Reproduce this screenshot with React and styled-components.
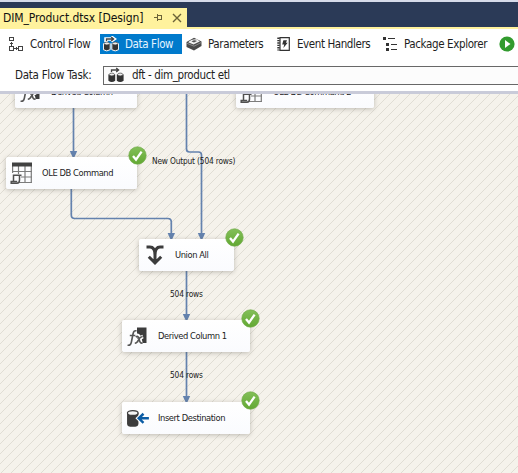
import React from 'react';
import styled, { createGlobalStyle } from 'styled-components';

const Global = createGlobalStyle`
  body { margin: 0; background: #fff; overflow: hidden; }
  * { box-sizing: border-box; }
`;
const Window = styled.div`
  width: 518px; height: 473px; display: flex; flex-direction: column; overflow: hidden;
  font-family: "DejaVu Sans Condensed", "DejaVu Sans", sans-serif;
  font-stretch: condensed; font-size: 11.5px; color: #1e1e1e;
`;
const TabStrip = styled.header`
  height: 29px; flex: none; display: flex; align-items: flex-end;
  background: #2b3a57; border-top: 2px solid #d6dbe9; border-bottom: 2px solid #fff29d;
`;
const DocumentTab = styled.div`
  width: 187px; height: 19px; padding-left: 3px; display: flex; align-items: center;
  background: #fff29d; color: #111;
  svg { flex: none; }
`;
const Label = styled.span`
  display: block; flex: none; width: ${p => p.$w}px; white-space: nowrap;
  font-size: ${p => p.$size || 11.5}px; letter-spacing: ${p => p.$ls || 0}px; line-height: 16px;
`;
const Toolbar = styled.nav`
  height: 33px; flex: none; display: flex; padding-top: 5px; background: #fff;
`;
const ToolButton = styled.div`
  height: 20px; flex: none; width: ${p => p.$w}px; padding-left: ${p => p.$pad}px;
  display: flex; align-items: center; gap: ${p => p.$gap}px;
  background: ${p => (p.$active ? '#007acc' : 'transparent')};
  color: ${p => (p.$active ? '#e6f4ff' : '#1e1e1e')};
  svg { flex: none; }
`;
const TaskBar = styled.div`
  height: 32px; flex: none; display: flex; align-items: center; padding: 0 0 3px 15px;
  background: #fff; border-bottom: 3px solid #c9cbd9;
`;
const TaskSelect = styled.div`
  flex: none; width: 430px; height: 19px; display: flex; align-items: center; gap: 8px;
  padding-left: 4px; border: 1px solid #686868; background: #fcfcfc;
`;
const Surface = styled.main`
  position: relative; height: 379px; flex: none; overflow: hidden; background: #f5f2eb;
`;
const Wires = styled.svg`position: absolute; left: 0; top: 0;`;
const Node = styled.div`
  position: absolute; left: ${p => p.$x}px; top: ${p => p.$y}px; width: ${p => p.$w}px; height: 32px;
  display: flex; align-items: center; padding-left: ${p => p.$pad}px; gap: ${p => p.$gap}px;
  background: linear-gradient(#fff, #fafbfe); border-radius: 2px; color: #222;
  box-shadow: 0 1px 5px rgba(90, 85, 75, .36);
  > svg { flex: none; }
`;
const Badge = styled.svg`position: absolute; right: -10px; top: -11px;`;
const RowCount = styled.span`
  position: absolute; left: ${p => p.$x}px; top: ${p => p.$y}px; white-space: nowrap;
  font-size: 8.3px; line-height: 12px; letter-spacing: -0.17px; color: #222;
`;

const Pin = () => (
  <svg width="9" height="9" fill="none" stroke="#6b6238" shapeRendering="crispEdges">
    <path d="M0 4.5h3M3.5 1v7M3 2.5h5M3 6.5h5M7.5 2v5" />
  </svg>
);
const Close = () => (
  <svg width="10" height="10" stroke="#6b6238" strokeWidth="1.4"><path d="M1 1l8 8M9 1l-8 8" /></svg>
);
const ControlFlowIcon = () => (
  <svg width="15" height="16" fill="none" stroke="#444" shapeRendering="crispEdges">
    <path d="M.5 1.5h4v3h-4zM.5 10.5h4v4h-4zM9.5 10.5h4v4h-4zM2.5 6v4M1 7.5h3M5 12.5h4M7.5 11v3" />
  </svg>
);
const DataFlowIcon = ({ light }) => {
  const ring = light ? '#fff' : 'none';
  return (
    <svg width="16" height="16" viewBox="0 0 16 16">
      <path d="M3 6V3h7M8 .8L11 3 8 5.2" fill="none" stroke={ring} strokeWidth="3.5" />
      <path d="M.4 7.5h6.8v6.2q-3.4 2.4-6.8 0zM8.8 7.5h6.8v6.2q-3.4 2.4-6.8 0z" fill="#333" stroke={ring} />
      <path d="M3.5 5V3H10M8.2 1l2.4 2-2.4 2" fill="none" stroke="#444" strokeWidth="1.3" />
      <ellipse cx="3.8" cy="7.5" rx="2.6" ry="1.4" fill="#eee" stroke="#444" strokeWidth=".7" />
      <ellipse cx="12.2" cy="7.5" rx="2.6" ry="1.4" fill="#eee" stroke="#444" strokeWidth=".7" />
    </svg>
  );
};
const ParametersIcon = () => (
  <svg width="16" height="14" viewBox="0 0 16 14">
    <path d="M.5 5L8 .8l7.5 3.7V9L8 13.5.5 10z" fill="#4a4a4a" />
    <path d="M2.2 5.2Q5 2 11 2.3l2.8 2.2L7.5 7.4z" fill="#f2f2f2" /><path d="M5.5 4.4q3-2 5.5-.3L8 5.6z" fill="#555" />
    <path d="M1 6.3l7 2.9 7-3.6" fill="none" stroke="#999" strokeWidth=".8" />
  </svg>
);
const EventIcon = () => (
  <svg width="13" height="14" viewBox="0 0 13 14">
    <path d="M3 .7h9.3v12.6H3z" fill="#fff" stroke="#333" strokeWidth="1.2" />
    <path d="M1.5 .5v13" stroke="#333" strokeWidth="2.4" strokeDasharray="1.4 1" />
    <path d="M6.4 3.2h3.6L8.9 5.8h1.8L6.4 11l.8-3.6H5.2z" fill="#333" />
  </svg>
);
const ExplorerIcon = () => (
  <svg width="15" height="15" fill="#333" shapeRendering="crispEdges">
    <path d="M0 0h3v3H0zM5 1h7v1H5zM3 6h3v3H3zM8 7h6v1H8zM3 11h3v3H3zM8 12h6v1H8z" />
  </svg>
);
const PlayIcon = () => (
  <svg width="16" height="16" viewBox="0 0 16 16">
    <circle cx="8" cy="8" r="7.6" fill="#329b2e" /><path d="M6 4l5.5 4L6 12z" fill="#fff" />
  </svg>
);
const TableIcon = () => (
  <svg width="24" height="24" viewBox="0 0 24 24" fill="none">
    <path d="M3.6 2v10M9.5 5v8M16 5v17M22.3 3v19M3 10.5h20M12 16h11M10 21.5h13" stroke="#7c7c7c" strokeWidth="1.2" />
    <path d="M3 1.5h20v4H3z" fill="#414141" />
    <path d="M4.5 21V14.2h8M10.5 14v5q0 3.2-2.5 3.2H2.2v-1.6h6" stroke="#505050" strokeWidth="1.5" />
  </svg>
);
const MergeIcon = () => (
  <svg width="20" height="22" viewBox="0 0 20 22" fill="none" stroke="#3c3c3c" strokeWidth="3">
    <path d="M1.5 3H5q5 0 5 8v7M18.5 3H15q-5 0-5 8M3.8 12.7L10 18.8l6.2-6.1" />
  </svg>
);
const FormulaIcon = () => (
  <svg width="23" height="23" viewBox="0 0 23 23">
    <path d="M11 2.5h9.5v15.5H11z" fill="#3c3c3c" />
    <path d="M9.5 10.5q3-1 4 2l1.5 6M17 11.5q-3 1-7 7" fill="none" stroke="#fff" strokeWidth="3.6" />
    <g fill="none" stroke="#555" strokeWidth="1.6">
      <path d="M10.5 6Q7.8 4.8 7 9L5.4 17Q4.6 21 1.6 20M3.8 10.5h5.6M9.8 12q2.2-1.6 3 1l1 3.6q.8 2.4 2.8 1M16.6 11.8q-2-.6-3.8 2.8t-4 3.6" />
    </g>
  </svg>
);
const DestinationIcon = () => (
  <svg width="23" height="19" viewBox="0 0 24 20">
    <path d="M1 4v11.4q0 3.4 6 3.4t6-3.4V4z" fill="#3c3c3c" />
    <ellipse cx="7" cy="4.2" rx="5.6" ry="2.6" fill="#f5f5f5" stroke="#3c3c3c" strokeWidth="1.3" />
    <path d="M24 9.8H14M18 5l-5 4.8 5 4.8" fill="none" stroke="#fff" strokeWidth="4.4" />
    <path d="M24 9.8H14M18.3 5l-5 4.8 5 4.8" fill="none" stroke="#0c5da5" strokeWidth="2.6" />
  </svg>
);
const Success = () => (
  <Badge width="19" height="19" viewBox="0 0 19 19">
    <defs><linearGradient id="ok" x2="0" y2="1"><stop stopColor="#83bf59" /><stop offset="1" stopColor="#62a832" /></linearGradient></defs>
    <circle cx="9.5" cy="9.5" r="8.7" fill="url(#ok)" stroke="#72ac4a" strokeWidth=".7" />
    <path d="M5 10l3 3.6 5.6-8" fill="none" stroke="#fff" strokeWidth="2.3" />
  </Badge>
);

const nodes = [
  { x: 15, y: -18, w: 122, text: 'Derived Column', tw: 70, Icon: FormulaIcon, pad: 4, gap: 9 },
  { x: 236, y: -18, w: 138, text: 'OLE DB Command 2', tw: 80, Icon: TableIcon, pad: 3, gap: 10 },
  { x: 6, y: 63, w: 131, text: 'OLE DB Command', tw: 71, Icon: TableIcon, pad: 3, gap: 9, ok: true },
  { x: 139, y: 145, w: 95, text: 'Union All', tw: 35, Icon: MergeIcon, pad: 5.5, gap: 10.5, ok: true },
  { x: 122, y: 226, w: 128, text: 'Derived Column 1', tw: 70, Icon: FormulaIcon, pad: 4, gap: 9, ok: true },
  { x: 122, y: 308, w: 128, text: 'Insert Destination', tw: 70, Icon: DestinationIcon, pad: 4, gap: 9, ok: true },
];
const arrows = [[73.5, 63], [171.3, 145], [201.5, 145], [186.5, 226], [186.5, 308]];

export default function App() {
  return (
    <Window>
      <Global />
      <TabStrip>
        <DocumentTab>
          <Label $w={151} $size={12} $ls={-0.1}>DIM_Product.dtsx [Design]</Label>
          <Pin /><Label $w={9} /><Close />
        </DocumentTab>
      </TabStrip>
      <Toolbar>
        <ToolButton $w={100} $pad={9} $gap={6}><ControlFlowIcon /><Label $w={62} $ls={-0.33}>Control Flow</Label></ToolButton>
        <ToolButton $w={82} $pad={3} $gap={6} $active><DataFlowIcon light /><Label $w={50} $ls={-0.38}>Data Flow</Label></ToolButton>
        <ToolButton $w={94} $pad={4} $gap={6}><ParametersIcon /><Label $w={58} $ls={-0.38}>Parameters</Label></ToolButton>
        <ToolButton $w={106} $pad={1} $gap={7}><EventIcon /><Label $w={76} $ls={-0.42}>Event Handlers</Label></ToolButton>
        <ToolButton $w={117} $pad={1} $gap={6}><ExplorerIcon /><Label $w={86} $ls={-0.38}>Package Explorer</Label></ToolButton>
        <ToolButton $w={19} $pad={0} $gap={0}><PlayIcon /></ToolButton>
      </Toolbar>
      <TaskBar>
        <Label $w={88} $ls={-0.27}>Data Flow Task:</Label>
        <TaskSelect><DataFlowIcon /><Label $w={110} $ls={-0.36}>dft - dim_product etl</Label></TaskSelect>
      </TaskBar>
      <Surface>
        <Wires width="518" height="379">
          <defs>
            <pattern id="hatch" width="10" height="10" patternUnits="userSpaceOnUse">
              {Array.from({ length: 10 }, (_, i) => <rect key={i} x={i} y={(19 - i) % 10} width="1" height="1" fill="#e0ddd4" />)}
            </pattern>
          </defs>
          <rect width="518" height="379" fill="url(#hatch)" />
          <g fill="none" stroke="#6482ae" strokeWidth="1.7">
            <path d="M73.5 14v45M71.3 95v26q0 3.5 3.5 3.5h93q3.5 0 3.5 3.5v14M186.5 0v55q0 3 3 3h9q3 0 3 3v81M186.5 177v46M186.5 258v47" />
          </g>
          {arrows.map(([x, y]) => <path key={`${x}-${y}`} d={`M${x - 3.7} ${y - 6}h7.4L${x + 1} ${y}h-2z`} fill="#6482ae" />)}
        </Wires>
        {nodes.map(({ x, y, w, text, tw, Icon, pad, gap, ok }) => (
          <Node key={text} $x={x} $y={y} $w={w} $pad={pad} $gap={gap}>
            <Icon /><Label $w={tw} $size={9.3} $ls={-0.42}>{text}</Label>{ok && <Success />}
          </Node>
        ))}
        <RowCount $x={152} $y={61}>New Output (504 rows)</RowCount>
        <RowCount $x={170} $y={194}>504 rows</RowCount>
        <RowCount $x={170} $y={275}>504 rows</RowCount>
      </Surface>
    </Window>
  );
}
